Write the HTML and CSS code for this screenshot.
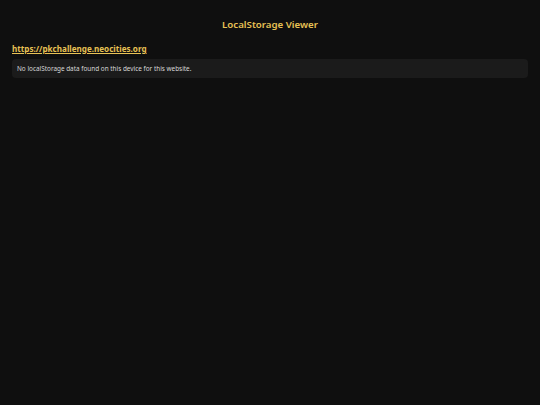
FILE: index.html
```html
<!DOCTYPE html>
<html>
<head>
<meta charset="utf-8">
<link rel="stylesheet" href="styles.css">
</head>
<body>
<div class="page">
  <h1 class="title">LocalStorage Viewer</h1>
  <section class="site">
    <a class="site-link" href="#">https://pkchallenge.neocities.org</a>
    <div class="empty">No localStorage data found on this device for this website.</div>
  </section>
</div>
</body>
</html>
```
FILE: styles.css
```css
html, body {
  margin: 0;
  padding: 0;
  background: #0f0f0f;
  height: 100%;
}
body {
  font-family: "Noto Sans", "Open Sans", sans-serif;
  color: #dddddd;
}
.page {
  padding: 17px 12px 0;
}
.title {
  margin: 0;
  text-align: center;
  font-size: 9.7px;
  line-height: 16px;
  font-weight: 600;
  color: #e8c255;
}
.site {
  margin-top: 10px;
  display: flex;
  flex-direction: column;
  gap: 5px;
}
.site-link {
  font-size: 8.1px;
  line-height: 11px;
  font-weight: 700;
  color: #e8c255;
  text-decoration: underline;
  align-self: flex-start;
}
.empty {
  background: #1b1b1b;
  border-radius: 4px;
  padding: 5px 5px;
  font-size: 6.4px;
  line-height: 9px;
  color: #d8d8d8;
}
```
